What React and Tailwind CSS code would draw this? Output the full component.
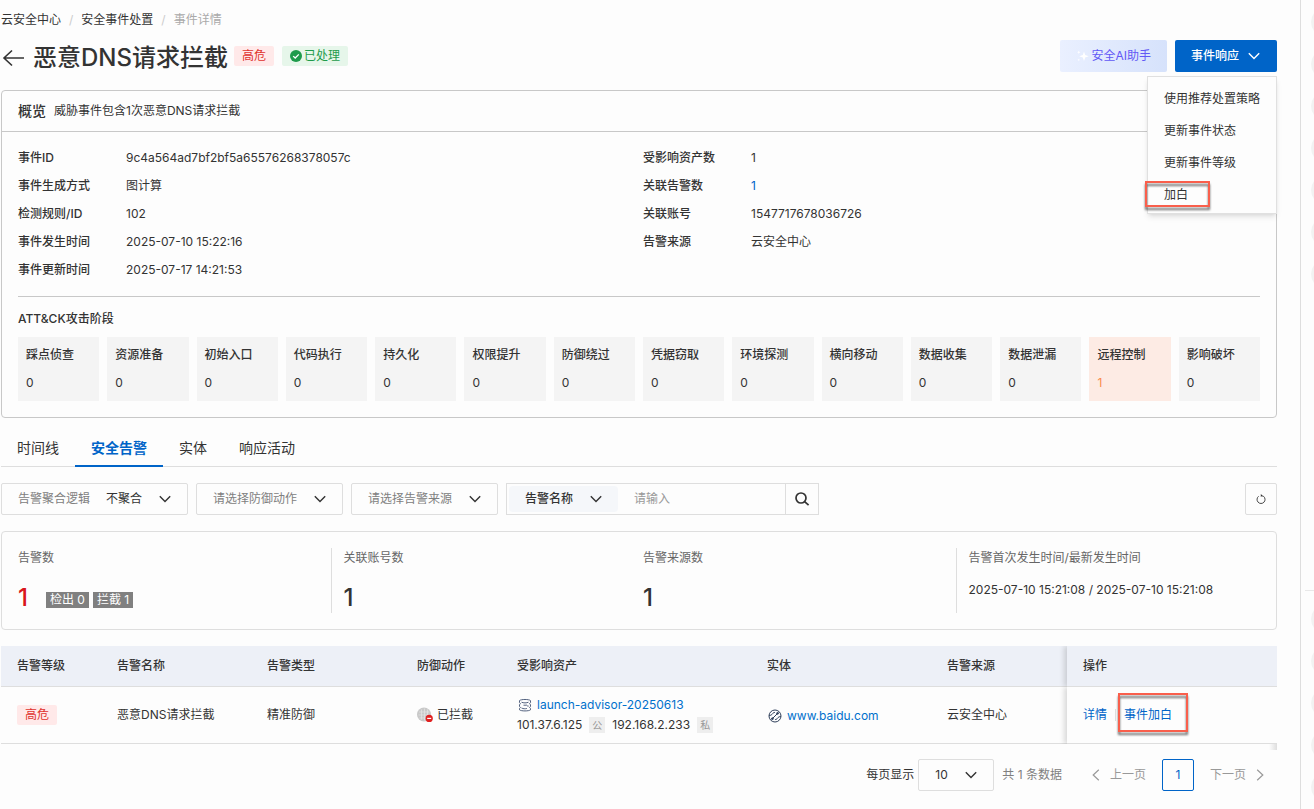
import React from 'react';
import clsx from 'clsx';

const overviewRows = [
  [{ label: '事件ID', value: '9c4a564ad7bf2bf5a65576268378057c' }, { label: '受影响资产数', value: '1' }],
  [{ label: '事件生成方式', value: '图计算' }, { label: '关联告警数', value: '1', link: true }],
  [{ label: '检测规则/ID', value: '102' }, { label: '关联账号', value: '1547717678036726' }],
  [{ label: '事件发生时间', value: '2025-07-10 15:22:16' }, { label: '告警来源', value: '云安全中心' }],
  [{ label: '事件更新时间', value: '2025-07-17 14:21:53' }],
];

const stages = [
  { name: '踩点侦查', count: 0 },
  { name: '资源准备', count: 0 },
  { name: '初始入口', count: 0 },
  { name: '代码执行', count: 0 },
  { name: '持久化', count: 0 },
  { name: '权限提升', count: 0 },
  { name: '防御绕过', count: 0 },
  { name: '凭据窃取', count: 0 },
  { name: '环境探测', count: 0 },
  { name: '横向移动', count: 0 },
  { name: '数据收集', count: 0 },
  { name: '数据泄漏', count: 0 },
  { name: '远程控制', count: 1 },
  { name: '影响破坏', count: 0 },
];

const tabs = ['时间线', '安全告警', '实体', '响应活动'];
const menuItems = ['使用推荐处置策略', '更新事件状态', '更新事件等级', '加白'];

const ChevronDown = ({ className }) => (
  <svg viewBox="0 0 12 8" fill="none" stroke="currentColor" strokeWidth="1.4" className={clsx('h-2 w-3', className)} aria-hidden="true">
    <path d="M0.8 1.2 6 6.6l5.2-5.4" />
  </svg>
);

const BackIcon = () => (
  <svg viewBox="0 0 24 20" fill="none" stroke="currentColor" strokeWidth="1.6" className="h-5 w-6" aria-hidden="true">
    <path d="M23 10H3M11 2.5 3 10l8 7.5" />
  </svg>
);

const SparkleIcon = () => (
  <svg viewBox="0 0 14 14" fill="#fff" className="h-3.5 w-3.5" aria-hidden="true">
    <path d="M8 2.5 9.2 6l3.6 1.2-3.6 1.2L8 12 6.8 8.4 3.2 7.2 6.8 6zM2.8 1.5l.5 1.2 1.2.5-1.2.5-.5 1.2-.5-1.2-1.2-.5 1.2-.5zM2.8 9.5l.4 1 1 .4-1 .4-.4 1-.4-1-1-.4 1-.4z" />
  </svg>
);

const CheckIcon = () => (
  <svg viewBox="0 0 12 12" className="h-3 w-3" aria-hidden="true">
    <circle cx="6" cy="6" r="6" fill="#1e9b4b" />
    <path d="M3.2 6.1 5.2 8l3.6-3.6" fill="none" stroke="#fff" strokeWidth="1.3" />
  </svg>
);

const SearchIcon = () => (
  <svg viewBox="0 0 16 16" fill="none" stroke="currentColor" strokeWidth="1.7" className="h-4 w-4" aria-hidden="true">
    <circle cx="7" cy="7" r="5" />
    <path d="m10.6 10.6 4 3.6" />
  </svg>
);

const RefreshIcon = () => (
  <svg viewBox="0 0 10 10" fill="none" stroke="currentColor" strokeWidth="0.9" className="h-2.5 w-2.5" aria-hidden="true">
    <path d="M2.6 2.3A4 4 0 1 0 7.6 2.4L5.2 1.6" />
    <path d="M4.8 0 6.4 1.6 4.8 3z" fill="currentColor" stroke="none" />
  </svg>
);

const BlockedIcon = () => (
  <svg viewBox="0 0 16 16" className="h-4 w-4" aria-hidden="true">
    <circle cx="7" cy="7.5" r="7" fill="#c9c9c9" />
    <path d="M2 5h10M1.5 8h11M2.5 11h9M4.5 2.5v10M7.5 1.5v12M10.5 2.5v10" stroke="#e2e2e2" strokeWidth="0.8" fill="none" />
    <circle cx="12.2" cy="11.4" r="3.6" fill="#e02020" />
    <path d="M10.2 11.4h4" stroke="#fff" strokeWidth="1.2" />
  </svg>
);

const ServerIcon = () => (
  <svg viewBox="0 0 14 14" fill="none" stroke="#3f5070" strokeWidth="0.9" className="h-3.5 w-3.5" aria-hidden="true">
    <path d="M1.5 2.6C3 1.1 11 1.1 12.5 2.6v2L11.6 5.6l.9 1.2v1.6l-.9 1.1.9 1v1.3c-1.5 1.5-9.5 1.5-11 0v-1.3l.9-1-.9-1.1V6.800l.9-1.2-.9-1z" />
    <path d="M3.500 4.200c1.800.9 5.200.9 7 0M5.500 7.200h3.200l1 .9h1M3.500 10c1.800.9 3.600.9 5.400.5" />
  </svg>
);

const DomainIcon = () => (
  <svg viewBox="0 0 14 14" fill="none" stroke="#2f3f5a" strokeWidth="1" className="h-3.5 w-3.5" aria-hidden="true">
    <circle cx="7" cy="7" r="6" />
    <path d="M4.600 9.400 9.400 4.600M1.200 6.600c1.600-.2 2.600-.8 3.300-1.800.6-.9 1.300-1.500 2.500-1.300M12.800 7.400c-1.600.2-2.600.8-3.300 1.800-.6.9-1.300 1.500-2.500 1.300" />
    <circle cx="9.600" cy="4.300" r="0.900" fill="#2f3f5a" />
    <circle cx="4.400" cy="9.700" r="0.900" fill="#2f3f5a" />
  </svg>
);

const PageArrow = ({ flip }) => (
  <svg viewBox="0 0 8 12" fill="none" stroke="currentColor" strokeWidth="1.2" className={clsx('h-3 w-2', flip && 'rotate-180')} aria-hidden="true">
    <path d="M6.8 0.8 1.2 6l5.6 5.2" />
  </svg>
);

const HighRiskTag = () => (
  <span className="inline-flex h-5 items-center rounded-xs bg-[#ffe9e9] px-2 text-[#e0322d]">高危</span>
);

const Highlight = ({ className }) => (
  <span className={clsx('pointer-events-none absolute border-2 border-[#f95f4c] drop-shadow-[0_3px_1px_rgba(0,0,0,0.55)]', className)} />
);

const FilterSelect = ({ id, label, prefix, option, className, muted }) => (
  <div className={clsx('relative flex h-8 items-center rounded-xs border border-[#dedede] pl-4', className)}>
    {prefix && <label htmlFor={id} className="mr-4 shrink-0 text-[#808080]">{prefix}</label>}
    <select
      id={id}
      aria-label={label}
      className={clsx('h-full min-w-0 flex-1 appearance-none bg-transparent outline-none', muted && 'text-[#808080]')}
    >
      <option>{option}</option>
    </select>
    <ChevronDown className="pointer-events-none absolute right-4" />
  </div>
);

const StatItem = ({ label, divider, children }) => (
  <div className={clsx('h-[65px]', divider && 'border-l border-[#dedede] pl-3')}>
    <div className="h-5 text-[#666]">{label}</div>
    {children}
  </div>
);

const PageHeader = () => (
  <header className="flex h-8 items-center">
    <div className="flex items-center gap-2 pt-1">
      <button type="button" aria-label="返回"><BackIcon /></button>
      <h1 className="text-2xl font-medium">恶意DNS请求拦截</h1>
    </div>
    <div className="ml-1.5 flex gap-2">
      <HighRiskTag />
      <span className="inline-flex h-5 items-center gap-0.5 rounded-xs bg-[#e6f6ea] px-2 text-[#1e9b4b]">
        <CheckIcon />已处理
      </span>
    </div>
    <div className="ml-auto flex gap-2">
      <button type="button" className="flex h-8 items-center gap-px rounded-xs bg-linear-to-r from-[#eaf0ff] to-[#d6e2fb] px-4 text-[#6158f5]">
        <SparkleIcon />安全AI助手
      </button>
      <div className="relative">
        <button type="button" className="flex h-8 items-center gap-2 rounded-xs bg-[#0064c8] px-4 font-medium text-white" aria-expanded="true">
          事件响应<ChevronDown className="mx-px" />
        </button>
        <ul className="absolute top-9 right-0 z-10 border border-[#e0e0e0] bg-[#fdfdfd] pt-1.5 pb-0.5 shadow-md">
          {menuItems.map((item) => (
            <li key={item} className="relative">
              <button type="button" className="h-8 px-4 whitespace-nowrap">{item}</button>
              {item === '加白' && <Highlight className="top-0.5 -left-[3px] h-[26px] w-[65px]" />}
            </li>
          ))}
        </ul>
      </div>
    </div>
  </header>
);

const Overview = () => (
  <section className="mt-[18px] rounded-sm border border-[#c8c8c8]">
    <div className="flex h-[41px] items-center gap-2 border-b border-[#c8c8c8] px-4">
      <h2 className="text-sm font-medium">概览</h2>
      <span>威胁事件包含1次恶意DNS请求拦截</span>
    </div>
    <dl className="py-3 pr-2 pl-4">
      {overviewRows.map((row) => (
        <div key={row[0].label} className="grid h-7 grid-cols-2 items-center">
          {row.map((field) => (
            <div key={field.label} className="flex">
              <dt className="w-[108px] font-medium">{field.label}</dt>
              <dd>{field.link ? <a href="#alerts" className="text-[#0064c8]">{field.value}</a> : field.value}</dd>
            </div>
          ))}
        </div>
      ))}
    </dl>
    <div className="mx-4 border-t border-[#c8c8c8] pt-3 pb-4">
      <h3 className="leading-5 font-medium">ATT&amp;CK攻击阶段</h3>
      <div className="mt-2 grid grid-cols-14 gap-2">
        {stages.map((stage) => (
          <div key={stage.name} className={clsx('flex h-16 flex-col gap-2 p-2', stage.count > 0 ? 'bg-[#fdebe4]' : 'bg-[#f4f4f4]')}>
            <div className="leading-5 font-medium whitespace-nowrap">{stage.name}</div>
            <div className={clsx('leading-5', stage.count > 0 && 'text-[#fa8a4b]')}>{stage.count}</div>
          </div>
        ))}
      </div>
    </div>
  </section>
);

const Tabs = () => (
  <nav className="mt-[11px] flex h-[38px] border-b border-[#dedede] text-sm">
    {tabs.map((tab) => (
      <button
        key={tab}
        type="button"
        className={clsx('-mb-px h-[38px] border-b-2 px-4 pt-0.5', tab === '安全告警' ? 'border-[#0064c8] font-bold text-[#0064c8]' : 'border-transparent')}
      >
        {tab}
      </button>
    ))}
  </nav>
);

const Filters = () => (
  <div className="mt-4 flex gap-2">
    <FilterSelect id="group-by" prefix="告警聚合逻辑" option="不聚合" className="w-[187px]" />
    <FilterSelect id="action" label="防御动作" option="请选择防御动作" className="w-[147px]" muted />
    <FilterSelect id="source" label="告警来源" option="请选择告警来源" className="w-[147px]" muted />
    <div className="flex h-8 w-[313px] border border-[#dedede]">
      <div className="relative m-0.5 flex w-[109px] items-center rounded-sm bg-[#f5f7fa] pl-4">
        <select aria-label="搜索字段" className="h-full w-full appearance-none bg-transparent font-medium outline-none">
          <option>告警名称</option>
        </select>
        <ChevronDown className="pointer-events-none absolute right-4" />
      </div>
      <input aria-label="搜索内容" placeholder="请输入" className="min-w-0 flex-1 px-3.5 outline-none placeholder:text-[#999]" />
      <button type="button" aria-label="搜索" className="flex w-[33px] items-center justify-center border-l border-[#dedede]">
        <SearchIcon />
      </button>
    </div>
    <button type="button" aria-label="刷新" className="ml-auto flex h-8 w-8 items-center justify-center rounded-xs border border-[#dedede]">
      <RefreshIcon />
    </button>
  </div>
);

const Stats = () => (
  <section className="mt-4 grid grid-cols-4 rounded-sm border border-[#dedede] py-4 pr-2 pl-4 leading-5">
    <StatItem label="告警数">
      <div className="mt-3 flex h-9 items-center gap-1">
        <span className="mr-3.5 text-2xl font-medium text-[#d9161c]">1</span>
        <span className="mt-1 bg-[#808080] px-1 leading-4 text-white">检出 0</span>
        <span className="mt-1 bg-[#808080] px-1 leading-4 text-white">拦截 1</span>
      </div>
    </StatItem>
    <StatItem label="关联账号数" divider>
      <div className="mt-3 flex h-9 items-center text-2xl font-medium">1</div>
    </StatItem>
    <StatItem label="告警来源数">
      <div className="mt-3 flex h-9 items-center text-2xl font-medium">1</div>
    </StatItem>
    <StatItem label="告警首次发生时间/最新发生时间" divider>
      <div className="mt-3 whitespace-nowrap">2025-07-10 15:21:08 / 2025-07-10 15:21:08</div>
    </StatItem>
  </section>
);

const AlertTable = () => (
  <div className="relative mt-4" id="alerts">
    <table className="w-full table-fixed border-separate border-spacing-0 text-left [&_td]:border-b [&_td]:border-[#dedede] [&_td]:px-4 [&_th]:border-b [&_th]:border-[#dedede] [&_th]:bg-[#edf0f7] [&_th]:px-4 [&_th]:font-medium">
      <thead>
        <tr className="h-[41px]">
          <th className="w-[100px]">告警等级</th>
          <th className="w-[150px]">告警名称</th>
          <th className="w-[150px]">告警类型</th>
          <th className="w-[100px]">防御动作</th>
          <th className="w-[250px]">受影响资产</th>
          <th className="w-[180px]">实体</th>
          <th>告警来源</th>
          <th className="w-[210px] shadow-[-3px_0_5px_rgba(0,0,0,0.14)] [clip-path:inset(0_0_0_-10px)]">操作</th>
        </tr>
      </thead>
      <tbody>
        <tr className="h-[57px]">
          <td><HighRiskTag /></td>
          <td>恶意DNS请求拦截</td>
          <td>精准防御</td>
          <td>
            <div className="flex items-center gap-1 whitespace-nowrap"><BlockedIcon />已拦截</div>
          </td>
          <td>
            <div className="flex h-5 items-center gap-[5px] pl-px">
              <ServerIcon />
              <a href="#asset" className="text-[#0070cc]">launch-advisor-20250613</a>
            </div>
            <div className="flex h-5 items-center whitespace-nowrap">
              101.37.6.125
              <span className="mx-[7px] bg-[#eee] px-[3px] text-[10px] leading-4 text-[#999]">公</span>
              192.168.2.233
              <span className="mx-[7px] bg-[#eee] px-[3px] text-[10px] leading-4 text-[#999]">私</span>
            </div>
          </td>
          <td>
            <div className="flex items-center gap-[5px] pt-px pl-px">
              <DomainIcon />
              <a href="#entity" className="text-[#0070cc]">www.baidu.com</a>
            </div>
          </td>
          <td>云安全中心</td>
          <td className="bg-[#fdfdfd] shadow-[-3px_0_5px_rgba(0,0,0,0.14)] [clip-path:inset(0_0_0_-10px)]">
            <div className="flex h-5 items-center text-[#0064c8]">
              <a href="#detail">详情</a>
              <span className="mx-2 h-3 border-l border-[#dedede]" />
              <span className="relative flex">
                <a href="#whitelist">事件加白</a>
                <Highlight className="-top-3.5 -left-1.5 h-[39px] w-[70px]" />
              </span>
            </div>
          </td>
        </tr>
      </tbody>
    </table>
    <span className="absolute top-full right-0 h-1.5 w-2 bg-linear-to-l from-[#dedede] to-transparent" />
  </div>
);

const Pagination = () => (
  <div className="mt-[15px] flex h-8 items-center justify-end pr-3">
    <label htmlFor="page-size" className="mr-1">每页显示</label>
    <div className="relative flex h-8 w-[76px] items-center rounded-xs border border-[#dedede]">
      <select id="page-size" className="h-full w-full appearance-none bg-transparent pl-4 outline-none">
        <option>10</option>
      </select>
      <ChevronDown className="pointer-events-none absolute right-4" />
    </div>
    <span className="ml-2 text-[#808080]">共 1 条数据</span>
    <button type="button" className="ml-[30px] flex items-center gap-2.5 text-[#999]"><PageArrow />上一页</button>
    <button type="button" className="mx-4 h-8 w-8 rounded-xs border border-[#0064c8] text-[#0064c8]" aria-current="page">1</button>
    <button type="button" className="flex items-center gap-2.5 pr-px text-[#999]">下一页<PageArrow flip /></button>
  </div>
);

const SideRail = () => (
  <aside className="flex w-3.5 shrink-0 flex-col overflow-hidden border-l border-[#dedede] pt-2 pb-2">
    <div className="flex flex-col gap-3.5 pl-2.5">
      {[...Array(7)].map((_, i) => <span key={i} className="h-7 w-7 rounded-full bg-[#f2f2f2]" />)}
    </div>
    <div className="mt-auto ml-1 flex flex-col gap-3.5 border-t border-[#e8e8e8] pt-3.5 pl-1.5">
      {[...Array(5)].map((_, i) => <span key={i} className="h-7 w-7 rounded-full bg-[#f2f2f2]" />)}
    </div>
  </aside>
);

const App = () => (
  <div className="flex min-h-screen bg-[#fdfdfd] font-['Inter','Noto_Sans_CJK_SC',sans-serif] text-xs text-[#333]">
    <main className="min-w-0 flex-1 pt-2.5 pr-[23px] pl-px">
      <nav className="mb-2.5 flex h-5 items-center gap-2" aria-label="breadcrumb">
        <a href="#home">云安全中心</a>
        <span className="text-[#ccc]">/</span>
        <a href="#events">安全事件处置</a>
        <span className="text-[#ccc]">/</span>
        <span className="text-[#aaa]">事件详情</span>
      </nav>
      <PageHeader />
      <Overview />
      <Tabs />
      <Filters />
      <Stats />
      <AlertTable />
      <Pagination />
    </main>
    <SideRail />
  </div>
);

export default App;
